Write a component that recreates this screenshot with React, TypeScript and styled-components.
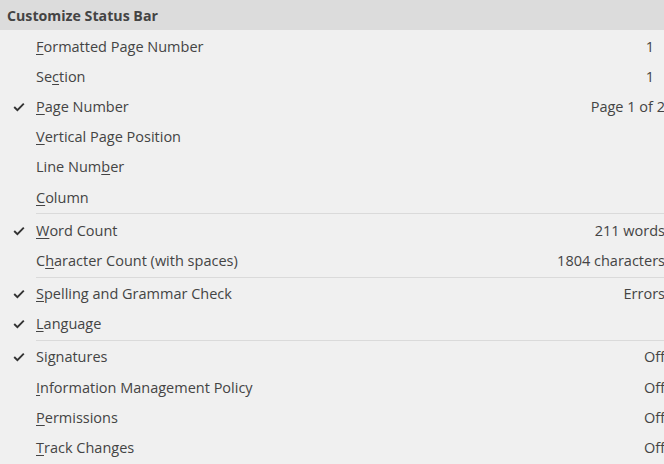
import React from 'react';
import styled, { createGlobalStyle } from 'styled-components';

interface StatusItem {
  label: string;
  access: number;
  value?: string;
  checked?: boolean;
  inset?: number;
}

const groups: Array<Array<StatusItem>> = [
  [
    { label: 'Formatted Page Number', access: 0, value: '1', inset: 11 },
    { label: 'Section', access: 2, value: '1', inset: 11 },
    { label: 'Page Number', access: 0, value: 'Page 1 of 2', checked: true },
    { label: 'Vertical Page Position', access: 0 },
    { label: 'Line Number', access: 8 },
    { label: 'Column', access: 0 },
  ],
  [
    { label: 'Word Count', access: 0, value: '211 words', checked: true },
    { label: 'Character Count (with spaces)', access: 1, value: '1804 characters' },
  ],
  [
    { label: 'Spelling and Grammar Check', access: 0, value: 'Errors', checked: true },
    { label: 'Language', access: 0, checked: true },
  ],
  [
    { label: 'Signatures', access: 2, value: 'Off', checked: true },
    { label: 'Information Management Policy', access: 0, value: 'Off' },
    { label: 'Permissions', access: 0, value: 'Off' },
    { label: 'Track Changes', access: 0, value: 'Off' },
  ],
];

const GlobalStyle = createGlobalStyle`
  body {
    margin: 0;
    background: #f0f0f0;
    overflow: hidden;
  }
`;

const Menu = styled.div`
  width: 665px;
  font-family: 'Open Sans', 'Noto Sans', sans-serif;
  color: #444;
`;

const Header = styled.div`
  height: 30px;
  display: flex;
  align-items: center;
  padding-left: 7px;
  margin-bottom: 1px;
  background: #dcdcdc;
  font-size: 14.2px;
  font-weight: bold;
  color: #444;
`;

const Row = styled.div`
  display: grid;
  grid-template-columns: 36px 1fr auto;
  align-items: center;
  height: 30.2px;
  font-size: 14.5px;
`;

const CheckCell = styled.div`
  display: flex;
  justify-content: center;
  padding-left: 2px;
  padding-top: 1px;
`;

const Label = styled.span`
  white-space: nowrap;

  u {
    text-decoration: underline;
    text-underline-offset: 2px;
  }
`;

const Value = styled.span<{ $inset?: number }>`
  white-space: nowrap;
  text-align: right;
  padding-right: ${(p) => p.$inset ?? 0}px;
`;

const Separator = styled.div`
  height: 1px;
  margin: 1px 0 1px 36px;
  background: #dadada;
`;

const Check = () => (
  <svg width="12" height="10" viewBox="0 0 12 10">
    <path d="M1.2 5 L4.4 8.2 L10.8 1.6" fill="none" stroke="#333" strokeWidth="1.9" />
  </svg>
);

const ItemLabel: React.FunctionComponent<{ item: StatusItem }> = ({ item }) => {
  const { label, access } = item;
  return (
    <Label>
      {label.slice(0, access)}
      <u>{label.charAt(access)}</u>
      {label.slice(access + 1)}
    </Label>
  );
};

const App: React.FunctionComponent = () => {
  return (
    <Menu>
      <GlobalStyle />
      <Header>Customize Status Bar</Header>
      {groups.map((group, gi) => (
        <React.Fragment key={gi}>
          {gi > 0 && <Separator />}
          {group.map((item) => (
            <Row key={item.label}>
              <CheckCell>{item.checked && <Check />}</CheckCell>
              <ItemLabel item={item} />
              <Value $inset={item.inset}>{item.value}</Value>
            </Row>
          ))}
        </React.Fragment>
      ))}
      <Separator />
    </Menu>
  );
};

export default App;
